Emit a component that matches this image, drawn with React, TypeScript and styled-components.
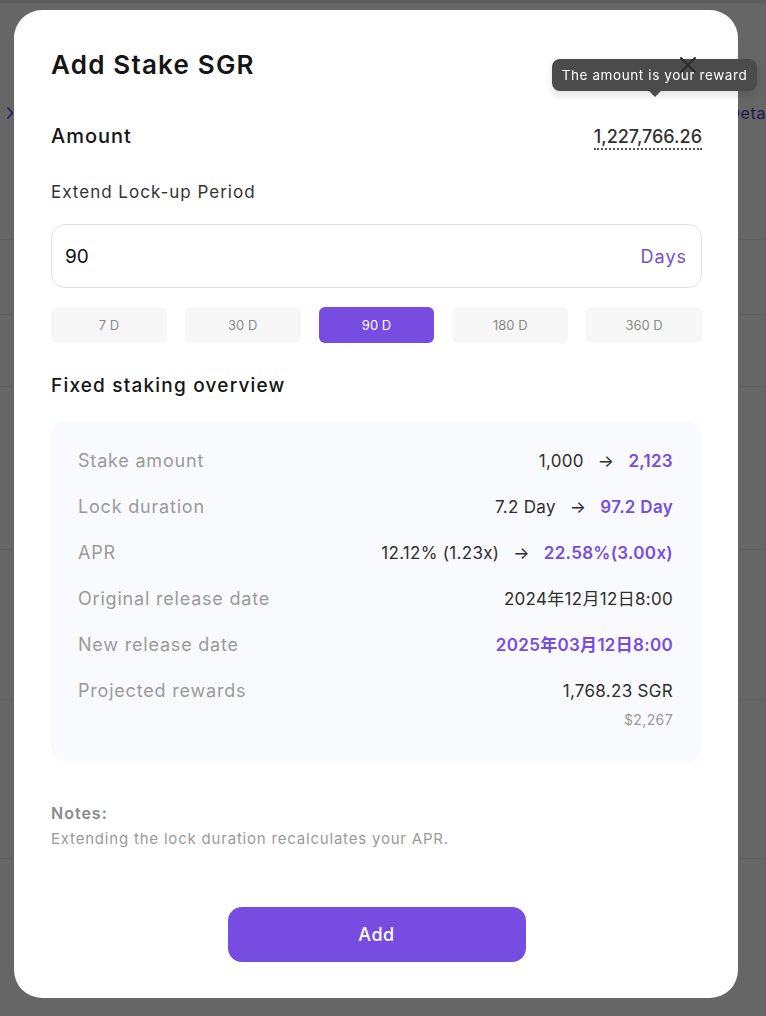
import React from "react";
import styled, { createGlobalStyle } from "styled-components";

const PURPLE = "#764de0";

const GlobalStyle = createGlobalStyle`
  html, body {
    margin: 0;
    padding: 0;
    background: #ffffff;
    overflow: hidden;
  }
  body {
    font-family: "Inter", "Noto Sans CJK SC", sans-serif;
  }
  * { box-sizing: border-box; }
`;

/* ---------- page behind overlay ---------- */
const Page = styled.div`
  width: 766px;
  height: 1016px;
  border-top: 3px solid #e6e6e6;
  overflow: hidden;
`;

const PageRow = styled.div<{ $h: number }>`
  height: ${(p) => p.$h}px;
  border-bottom: 1px solid #ececec;
  display: flex;
  align-items: flex-start;
`;

const TopRow = styled.div`
  display: flex;
  align-items: center;
  width: 100%;
  margin-top: 97px;
  height: 26px;
  padding-left: 6px;
  font-size: 16px;
`;

const Chevron = styled.svg`
  width: 8px;
  height: 14px;
`;

const DetailsLink = styled.span`
  margin-left: auto;
  margin-right: 0;
  color: #5b36c4;
  font-size: 16px;
  letter-spacing: 0.6px;
`;

/* ---------- overlay & modal ---------- */
const Overlay = styled.div`
  position: fixed;
  inset: 0;
  background: rgba(0, 0, 0, 0.6);
`;

const Modal = styled.div`
  position: relative;
  margin: 10px 0 0 14px;
  width: 724px;
  height: 988px;
  background: #ffffff;
  border-radius: 28px;
  padding: 37px 36px 36px 37px;
  display: flex;
  flex-direction: column;
  color: #111;
`;

const Header = styled.div`
  display: flex;
  align-items: center;
  justify-content: space-between;
  height: 36px;
`;

const Title = styled.h1`
  margin: 0;
  font-size: 26px;
  line-height: 36px;
  font-weight: 600;
  color: #151515;
  letter-spacing: 1.2px;
`;

const CloseButton = styled.button`
  position: relative;
  z-index: 3;
  border: none;
  background: none;
  padding: 0;
  margin-right: 5px;
  width: 18px;
  height: 18px;
  display: flex;
  align-items: center;
  justify-content: center;
  cursor: pointer;
`;

const Tooltip = styled.div`
  position: absolute;
  z-index: 2;
  left: 538px;
  top: 49px;
  width: 205px;
  height: 32px;
  border-radius: 8px;
  background: #4b4b4b;
  color: #ffffff;
  font-size: 13.5px;
  letter-spacing: 0.6px;
  display: flex;
  align-items: center;
  justify-content: center;
  box-shadow: 0 4px 10px rgba(0, 0, 0, 0.12);

  &::after {
    content: "";
    position: absolute;
    left: 50%;
    bottom: -6px;
    transform: translateX(-50%);
    border-left: 6px solid transparent;
    border-right: 6px solid transparent;
    border-top: 6px solid #4b4b4b;
  }
`;

const AmountRow = styled.div`
  margin-top: 39px;
  height: 28px;
  display: flex;
  align-items: center;
  justify-content: space-between;
`;

const AmountLabel = styled.span`
  font-size: 20px;
  font-weight: 500;
  color: #151515;
  letter-spacing: 1px;
`;

const AmountValue = styled.span`
  font-size: 18px;
  line-height: 22px;
  font-weight: 500;
  color: #333;
  border-bottom: 2px dotted #555;
  margin-top: 4px;
`;

const SectionLabel = styled.div<{ $mt: number; $size: number; $weight: number }>`
  margin-top: ${(p) => p.$mt}px;
  font-size: ${(p) => p.$size}px;
  font-weight: ${(p) => p.$weight};
  line-height: ${(p) => (p.$size > 18 ? 28 : 24)}px;
  letter-spacing: ${(p) => (p.$size > 18 ? 1.2 : 1)}px;
  color: ${(p) => (p.$weight > 400 ? "#151515" : "#333")};
`;

const InputBox = styled.div`
  margin-top: 20px;
  height: 64px;
  border: 1px solid #e2e2e2;
  border-radius: 14px;
  display: flex;
  align-items: center;
  justify-content: space-between;
  padding: 0 14px 0 13px;
`;

const InputValue = styled.span`
  font-size: 19px;
  color: #111;
`;

const Unit = styled.span`
  font-size: 18px;
  letter-spacing: 1px;
  color: ${PURPLE};
`;

const ChipGrid = styled.div`
  margin-top: 19px;
  display: grid;
  grid-template-columns: repeat(5, 1fr);
  gap: 18px;
`;

const Chip = styled.button<{ $active?: boolean }>`
  height: 36px;
  border: none;
  border-radius: 6px;
  background: ${(p) => (p.$active ? PURPLE : "#f7f7f7")};
  color: ${(p) => (p.$active ? "#ffffff" : "#8a8a8a")};
  font-family: inherit;
  font-size: 13px;
  cursor: pointer;
`;

const Panel = styled.div`
  margin-top: 21px;
  background: #f9fafe;
  border-radius: 16px;
  padding: 28px 29px 32px 27px;
  display: flex;
  flex-direction: column;
  gap: 22px;
`;

const Row = styled.div`
  display: flex;
  justify-content: space-between;
  align-items: flex-start;
`;

const RowLabel = styled.span`
  font-size: 18px;
  line-height: 24px;
  letter-spacing: 0.8px;
  color: #9a9a9a;
`;

const RowValues = styled.div`
  display: flex;
  flex-direction: column;
  align-items: flex-end;
`;

const ValueLine = styled.div`
  display: flex;
  align-items: center;
  gap: 14px;
  font-size: 17px;
  line-height: 24px;
  letter-spacing: 0.3px;
  color: #2e2e2e;
`;

const Accent = styled.span`
  color: ${PURPLE};
  font-weight: 600;
`;

const SubValue = styled.span`
  margin-top: 7px;
  font-size: 14px;
  line-height: 20px;
  letter-spacing: 0.4px;
  color: #9a9a9a;
`;

const NotesTitle = styled.div`
  margin-top: 40px;
  font-size: 16px;
  line-height: 22px;
  font-weight: 600;
  letter-spacing: 1px;
  color: #8a8a8a;
`;

const NotesText = styled.div`
  margin-top: 5px;
  font-size: 15px;
  line-height: 20px;
  letter-spacing: 0.8px;
  color: #9a9a9a;
`;

const AddButton = styled.button`
  margin: 58px auto 0;
  width: 298px;
  height: 55px;
  border: none;
  border-radius: 14px;
  background: ${PURPLE};
  color: #ffffff;
  font-family: inherit;
  font-size: 18px;
  font-weight: 500;
  letter-spacing: 0.5px;
  cursor: pointer;
`;

const CloseIcon = () => (
  <svg width="18" height="18" viewBox="0 0 18 18" fill="none">
    <path d="M2 2L16 16M16 2L2 16" stroke="#2a2a2a" strokeWidth="2" strokeLinecap="round" />
  </svg>
);

const chips = ["7 D", "30 D", "90 D", "180 D", "360 D"];

const rows: { label: string; value: React.ReactNode; sub?: string }[] = [
  {
    label: "Stake amount",
    value: (
      <>
        <span>1,000</span>
        <span>→</span>
        <Accent>2,123</Accent>
      </>
    ),
  },
  {
    label: "Lock duration",
    value: (
      <>
        <span>7.2 Day</span>
        <span>→</span>
        <Accent>97.2 Day</Accent>
      </>
    ),
  },
  {
    label: "APR",
    value: (
      <>
        <span>12.12% (1.23x)</span>
        <span>→</span>
        <Accent>22.58%(3.00x)</Accent>
      </>
    ),
  },
  { label: "Original release date", value: <span>2024年12月12日8:00</span> },
  { label: "New release date", value: <Accent>2025年03月12日8:00</Accent> },
  { label: "Projected rewards", value: <span>1,768.23 SGR</span>, sub: "$2,267" },
];

export default function App() {
  return (
    <>
      <GlobalStyle />
      <Page>
        <PageRow $h={237}>
          <TopRow>
            <Chevron viewBox="0 0 8 14" fill="none">
              <path d="M1.5 1.5L6.5 7L1.5 12.5" stroke="#5b36c4" strokeWidth="1.4" />
            </Chevron>
            <DetailsLink>Deta</DetailsLink>
          </TopRow>
        </PageRow>
        <PageRow $h={75} />
        <PageRow $h={72} />
        <PageRow $h={163} />
        <PageRow $h={150} />
        <PageRow $h={159} />
      </Page>
      <Overlay>
        <Modal>
          <Tooltip>The amount is your reward</Tooltip>
          <Header>
            <Title>Add Stake SGR</Title>
            <CloseButton aria-label="Close">
              <CloseIcon />
            </CloseButton>
          </Header>
          <AmountRow>
            <AmountLabel>Amount</AmountLabel>
            <AmountValue>1,227,766.26</AmountValue>
          </AmountRow>
          <SectionLabel $mt={30} $size={17} $weight={400}>
            Extend Lock-up Period
          </SectionLabel>
          <InputBox>
            <InputValue>90</InputValue>
            <Unit>Days</Unit>
          </InputBox>
          <ChipGrid>
            {chips.map((c) => (
              <Chip key={c} $active={c === "90 D"}>
                {c}
              </Chip>
            ))}
          </ChipGrid>
          <SectionLabel $mt={29} $size={19} $weight={500}>
            Fixed staking overview
          </SectionLabel>
          <Panel>
            {rows.map((r) => (
              <Row key={r.label}>
                <RowLabel>{r.label}</RowLabel>
                <RowValues>
                  <ValueLine>{r.value}</ValueLine>
                  {r.sub && <SubValue>{r.sub}</SubValue>}
                </RowValues>
              </Row>
            ))}
          </Panel>
          <NotesTitle>Notes:</NotesTitle>
          <NotesText>Extending the lock duration recalculates your APR.</NotesText>
          <AddButton>Add</AddButton>
        </Modal>
      </Overlay>
    </>
  );
}
